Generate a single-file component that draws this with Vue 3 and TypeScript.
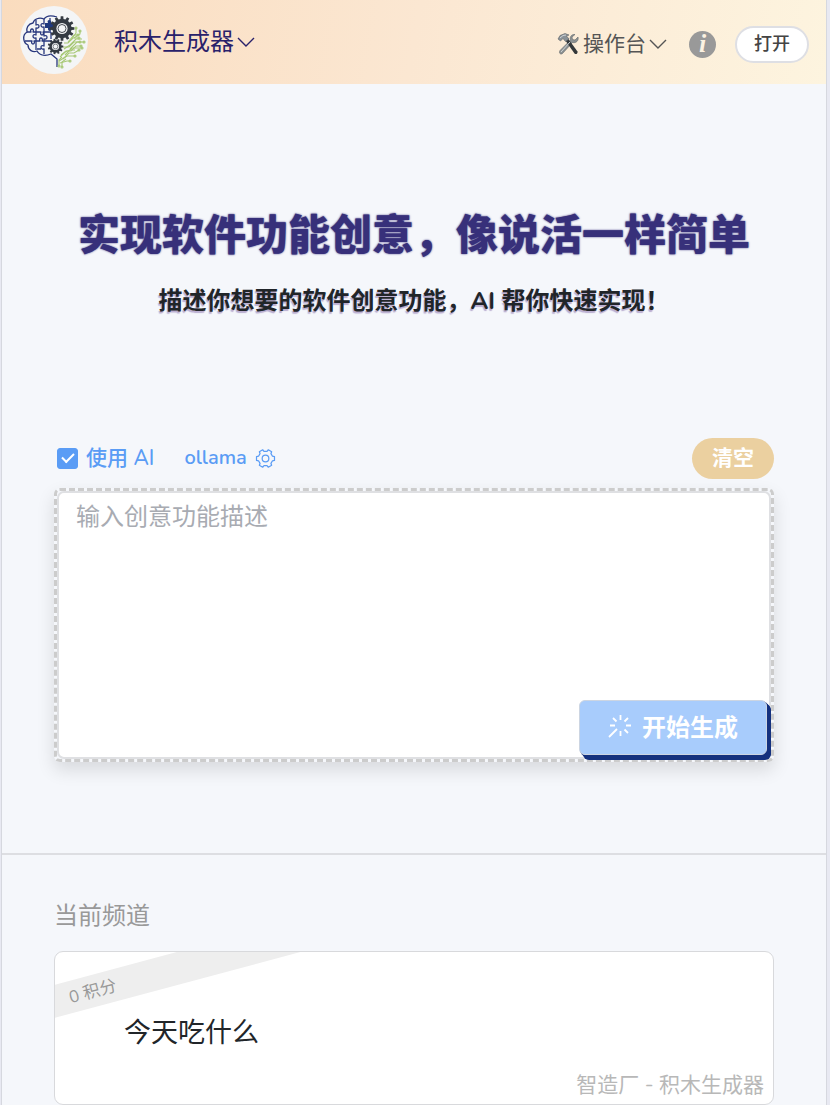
<script setup lang="ts">
import { ref } from 'vue'

const useAi = ref(true)
const idea = ref('')

function gear(cx: number, cy: number, outer: number, inner: number, teeth: number): string {
  const step = (Math.PI * 2) / teeth
  const at = (r: number, a: number) =>
    `${(cx + r * Math.cos(a)).toFixed(2)} ${(cy + r * Math.sin(a)).toFixed(2)}`
  let d = ''
  for (let i = 0; i < teeth; i++) {
    const a = i * step
    d += `${i ? 'L' : 'M'}${at(inner, a - step * 0.3)}L${at(outer, a - step * 0.2)}`
    d += `L${at(outer, a + step * 0.2)}L${at(inner, a + step * 0.3)}`
  }
  return d + 'Z'
}

const bigGear = gear(42, 22.5, 12.4, 9.6, 12)
const smallGear = gear(35.5, 40.5, 7.8, 6.2, 11)
const settingsGear = gear(12, 12, 10.5, 8.4, 6)

const circuits = [
  'M40 51L46 45H51L56 40H61', 'M43 53L49 47H54L59 44', 'M39 55L47 50H55',
  'M43 41H49L54 36H60', 'M44 37H48L53 32H59', 'M48 36L54 29H58',
  'M51 34L56 27V22', 'M39 60V54L42 51', 'M42 61V56L46 53', 'M50 43L57 36H64',
  'M40 57L47 55H50', 'M54 32L60 28V25', 'M45 49L52 42H62',
  'M44 43L50 39L56 33H62', 'M41 49L45 46L50 44H55',
]
const nodes = [
  [61, 40], [59, 44], [55, 50], [60, 36], [59, 32], [58, 29], [56, 22],
  [39, 60], [42, 61], [64, 36], [50, 55], [60, 25], [62, 42],
]
</script>

<template>
  <div class="page">
    <header class="bar">
      <svg class="logo" viewBox="0 0 68 68" aria-hidden="true">
        <circle cx="34" cy="34" r="34" fill="#f4f5f6" />
        <g fill="none" stroke="#28377d" stroke-width="1.3" stroke-linejoin="round">
          <path d="M37 11C31 9 26 10 24 13C19 11 14 13 13 17C8 18 6 22 7 26C2 29 3 37 8 39C8 44 13 47 17 45C20 50 26 50 31 48L37 53V61" />
          <path d="M16 14V19C20 17 20 23 16 22V29C12 27 12 33 16 32V44M24 13V18C20 16 20 22 24 21V30C28 28 28 34 24 33V40C20 38 20 44 24 43V48M7 26H11C9 22 15 22 13 26H21C19 30 25 30 23 26H31M5 35H12C10 39 16 39 14 35H20C18 31 24 31 22 35H32M17 43H21M30 12V18M31 26V33" />
        </g>
        <path d="M25 17H28C26 13 32 13 31 17H34V22H31C33 26 27 26 28 22H25Z" fill="#20397f" />
        <g fill="none" stroke="#a7c875" stroke-width="1.1">
          <path v-for="line in circuits" :key="line" :d="line" />
          <circle v-for="(n, i) in nodes" :key="i" :cx="n[0]" :cy="n[1]" r="1" />
        </g>
        <path :d="bigGear" fill="#343a42" />
        <circle cx="42" cy="22.5" r="5.6" fill="#f4f5f6" />
        <circle cx="42" cy="22.5" r="4" fill="none" stroke="#343a42" stroke-width=".9" />
        <path :d="smallGear" fill="#343a42" />
        <circle cx="35.5" cy="40.5" r="3.6" fill="#f4f5f6" />
        <circle cx="35.5" cy="40.5" r="2.4" fill="none" stroke="#343a42" stroke-width=".6" />
      </svg>
      <button class="menu brand" type="button">
        积木生成器
        <svg class="chevron" viewBox="0 0 18 10" aria-hidden="true"><path d="M1 1L9 9L17 1" /></svg>
      </button>
      <button class="menu console" type="button">
        <svg class="tools" viewBox="0 0 22 24" aria-hidden="true">
          <path d="M18 2.5C14.500 2 12.500 5 13.500 8L3 18.500C1.500 21 3.500 23 5.500 21.500L15.500 10.500C19 11.500 22 8.500 21 5L18 8L15.500 7.500L15 5Z" fill="#8c9192" stroke="#626769" stroke-width=".6" />
          <path d="M8 8L11 6.500L20.500 19.500C21 21.500 19 23 17.500 21.500Z" fill="#34383a" />
          <path d="M1 7L3 3.500L8 1.500L12 3L9.500 4L12 7L8.500 9.500L6 6.500L3.500 9Z" fill="#899197" stroke="#5c6266" stroke-width=".6" />
          <path d="M3 6L6 3.500L9 3M4 20L13 10" fill="none" stroke="#cfd3d5" stroke-width="1" />
        </svg>
        操作台
        <svg class="chevron" viewBox="0 0 18 10" aria-hidden="true"><path d="M1 1L9 9L17 1" /></svg>
      </button>
      <button class="info" type="button" aria-label="info">i</button>
      <button class="open" type="button">打开</button>
    </header>

    <main>
      <section class="hero">
        <h1>实现软件功能创意，像说活一样简单</h1>
        <h2>描述你想要的软件创意功能，AI 帮你快速实现！</h2>
      </section>

      <section class="composer">
        <div class="options">
          <label class="check">
            <input v-model="useAi" type="checkbox" />
            <span>使用 AI</span>
          </label>
          <button class="provider" type="button">
            ollama
            <svg viewBox="0 0 24 24" aria-hidden="true">
              <path :d="settingsGear" /><circle cx="12" cy="12" r="3.800" />
            </svg>
          </button>
          <button class="clear" type="button" @click="idea = ''">清空</button>
        </div>
        <div class="editor">
          <textarea v-model="idea" aria-label="创意功能描述" placeholder="输入创意功能描述"></textarea>
          <button class="generate" type="button">
            <svg viewBox="0 0 24 24" aria-hidden="true">
              <path d="M12.500 1V6M12.500 17V22M2 11.500H7M18 11.500H23M5 4L8.500 7.500M20 4L16.500 7.500M16.500 15.500L20 19M9 15L1 23" />
            </svg>
            开始生成
          </button>
        </div>
      </section>

      <section class="channel">
        <h3>当前频道</h3>
        <article class="card">
          <span class="ribbon">0 积分</span>
          <h4>今天吃什么</h4>
          <p>智造厂 - 积木生成器</p>
        </article>
      </section>
    </main>
  </div>
</template>

<style>
html {
  background: #e8e9f2;
}
body {
  margin: 0;
}
</style>

<style scoped>
.page {
  box-sizing: border-box;
  min-height: 100vh;
  margin: 0 3px 0 1px;
  border: solid #d6d8df;
  border-width: 0 1px;
  background: #f5f7fb;
  color: #212529;
  font-family: Nunito, "Open Sans", "Noto Sans CJK SC", sans-serif;
}
h1, h2, h3, h4, p {
  margin: 0;
}
button {
  padding: 0;
  border: 0;
  background: none;
  color: inherit;
  font: inherit;
  cursor: pointer;
}
.bar {
  display: flex;
  align-items: center;
  box-sizing: border-box;
  height: 84px;
  padding: 0 17px 4px 18px;
  background: linear-gradient(100deg, #fadcbe, #fbe7d2 50%, #fdf4df);
}
.logo {
  width: 68px;
  height: 68px;
  margin-right: 26px;
}
.menu {
  display: flex;
  align-items: center;
  padding-top: 4px;
}
.chevron {
  width: 18px;
  height: 10px;
  margin-left: 3px;
  fill: none;
  stroke: currentColor;
  stroke-width: 1.4;
}
.brand {
  color: #29216b;
  font-size: 24px;
  line-height: 36px;
}
.console {
  margin-left: auto;
  padding-top: 7px;
  color: #555;
  font-size: 21px;
  line-height: 32px;
}
.tools {
  width: 22px;
  height: 24px;
  margin-right: 4px;
}
.info {
  width: 27px;
  height: 27px;
  margin: 8px 19px 0 22px;
  border-radius: 50%;
  background: #999;
  color: #fcf2e2;
  font: italic bold 26px/26px "Liberation Serif", serif;
}
.open {
  box-sizing: border-box;
  width: 74px;
  height: 37px;
  margin-top: 8px;
  border: 2px solid #dedfe4;
  border-radius: 19px;
  background: #fff;
  color: #444;
  font-size: 18px;
  font-weight: 500;
  line-height: 32px;
}
.hero {
  padding-top: 121px;
  text-align: center;
}
h1 {
  color: #37307a;
  font-size: 42px;
  font-weight: 900;
  line-height: 64px;
  text-shadow: 0 0 2px #37307a;
}
h2 {
  margin-top: 14px;
  font-size: 24px;
  font-weight: 700;
  line-height: 36px;
  text-shadow: -1px 2px 1px #b9add0;
}
.composer {
  padding: 118px 52px 91px;
  border-bottom: 2px solid #dddee2;
}
.options {
  display: flex;
  align-items: center;
  height: 42px;
  color: #5a9cf5;
  font-size: 21px;
  font-weight: 500;
  line-height: 32px;
}
.check {
  display: flex;
  align-items: center;
  gap: 8px;
  margin-left: 3px;
}
.check input {
  display: grid;
  place-items: center;
  appearance: none;
  width: 21px;
  height: 21px;
  margin: 0;
  border: 1px solid #5a9cf5;
  border-radius: 3px;
  box-sizing: border-box;
}
.check input:checked {
  background: #5a9cf5;
}
.check input:checked::before {
  content: "";
  width: 10px;
  height: 5px;
  margin-bottom: 3px;
  border: solid #fff;
  border-width: 0 0 2px 2px;
  transform: rotate(-45deg);
}
.provider {
  display: flex;
  align-items: center;
  gap: 8px;
  margin-left: 30px;
  font-size: 20px;
  font-weight: 600;
}
.provider svg {
  width: 21px;
  height: 21px;
  fill: none;
  stroke: currentColor;
  stroke-width: 1.4;
  stroke-linejoin: round;
}
.clear {
  width: 82px;
  height: 41px;
  margin-left: auto;
  border-radius: 21px;
  background: #ebd0a0;
  color: #fff;
  font-weight: 700;
}
.editor {
  position: relative;
  display: flex;
  margin-top: 9px;
  border: 3px dashed #ccc;
  border-radius: 6px;
  box-shadow: 0 8px 18px rgb(0 0 0 / 12%);
}
textarea {
  flex: 1;
  box-sizing: border-box;
  min-width: 0;
  height: 268px;
  padding: 6px 17px;
  border: 2px solid #dfe0e3;
  border-radius: 7px;
  background: #fff;
  color: inherit;
  font: inherit;
  font-size: 24px;
  line-height: 36px;
  resize: none;
  outline: 0;
}
textarea::placeholder {
  color: #a8abb2;
  opacity: 1;
}
.generate {
  position: absolute;
  right: 4px;
  bottom: 4px;
  display: flex;
  align-items: center;
  justify-content: center;
  gap: 10px;
  box-sizing: border-box;
  width: 188px;
  height: 55px;
  padding-bottom: 4px;
  border: 1px solid #ccd5e2;
  border-radius: 6px;
  background: #a8ccfc;
  box-shadow: 1px 1px #14317f, 2px 2px #14317f, 3px 3px #14317f, 4px 4px #14317f, 4px 5px #14317f;
  color: #fff;
  font-size: 24px;
  font-weight: 700;
}
.generate svg {
  width: 24px;
  height: 24px;
  fill: none;
  stroke: #fff;
  stroke-width: 1.8;
}
.channel {
  padding: 43px 52px 0;
}
h3 {
  color: #999;
  font-size: 24px;
  font-weight: 400;
  line-height: 36px;
}
.card {
  position: relative;
  box-sizing: border-box;
  height: 154px;
  margin-top: 17px;
  overflow: hidden;
  border: 1px solid #d8d9dc;
  border-radius: 9px;
  background: #fff;
}
.ribbon {
  position: absolute;
  top: 38px;
  left: -20px;
  box-sizing: border-box;
  width: 400px;
  padding: 2px 0 0 31px;
  background: #eee;
  color: #999;
  font-size: 17px;
  line-height: 30px;
  transform: rotate(-15deg);
  transform-origin: 0 0;
}
h4 {
  margin: 62px 0 0 69px;
  font-size: 27px;
  font-weight: 400;
  line-height: 40px;
}
.card p {
  margin: 15px 9px 0;
  color: #b8b8b8;
  font-size: 21px;
  line-height: 32px;
  text-align: right;
}
</style>
